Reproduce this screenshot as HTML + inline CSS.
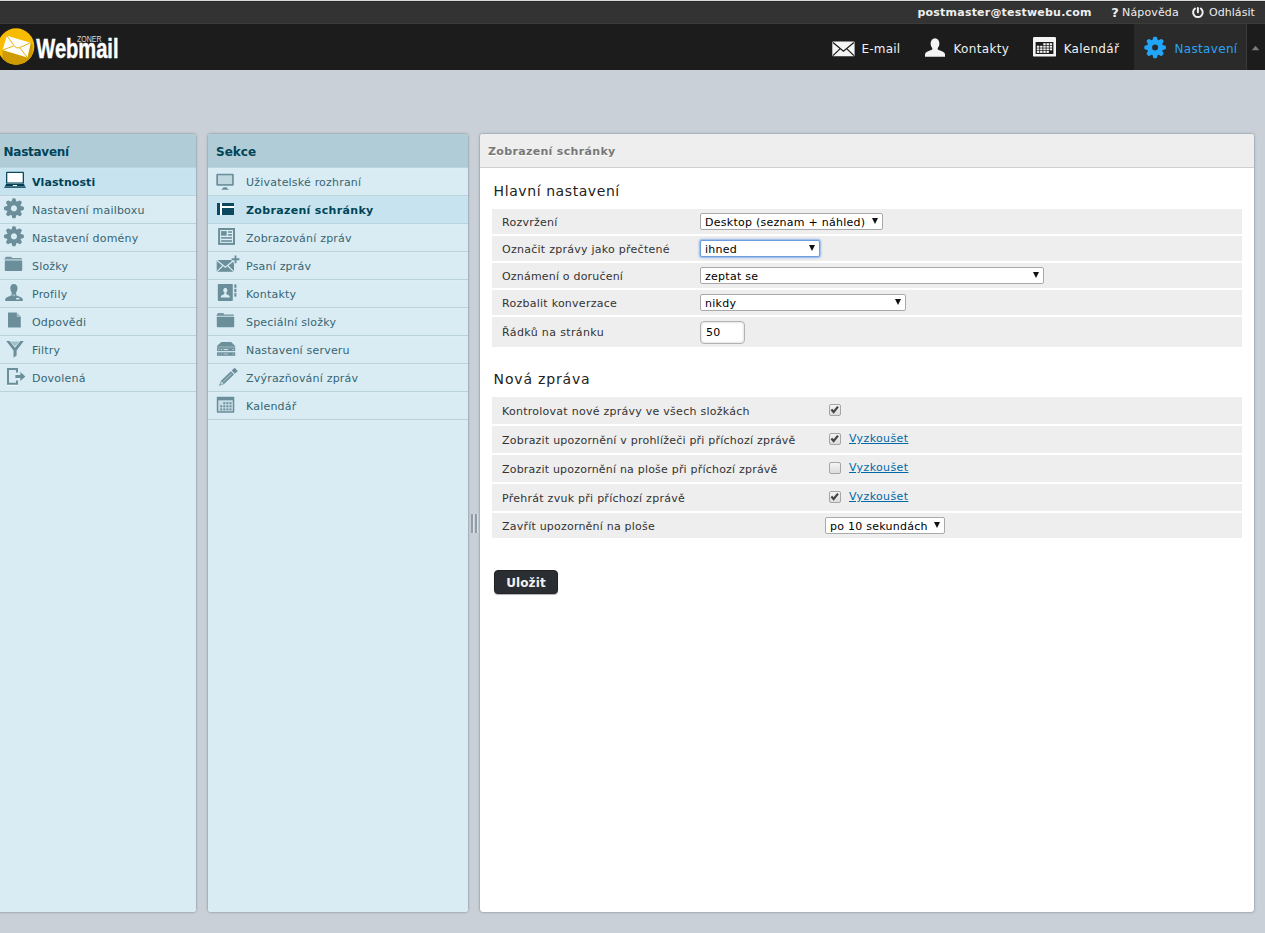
<!DOCTYPE html>
<html lang="cs">
<head>
<meta charset="utf-8">
<title>Zoner Webmail :: Nastavení</title>
<style>
html,body{margin:0;padding:0;}
body{width:1265px;height:933px;overflow:hidden;background:#c9d0d8;font-family:"DejaVu Sans","Liberation Sans",sans-serif;font-size:11px;color:#333;position:relative;}
*{box-sizing:border-box;}
a{color:#0069a6;}
#edge{position:absolute;left:0;top:0;width:1265px;height:1px;background:#d8d8d8;}
#topline{position:absolute;left:0;top:1px;width:1265px;height:23px;background:#333333;color:#f0f0f0;border-top:1px solid #2b2b2b;border-bottom:1px solid #3b3b3b;}
#topline span,#topline a{position:absolute;top:-1px;line-height:24px;white-space:nowrap;color:#eee;text-decoration:none;}
#topnav{position:absolute;left:0;top:24px;width:1265px;height:46px;background:#1c1c1c;}
#seltab{position:absolute;left:1134px;top:0;width:113px;height:46px;background:#2a2a2a;border-right:1px solid #3a3a3a;}
#taskbar a{position:absolute;top:0;height:46px;line-height:50px;color:#f0f0f0;font-size:12px;text-decoration:none;white-space:nowrap;}
.uibox{position:absolute;border:1px solid #a9b3bd;border-radius:4px;background:#fff;overflow:hidden;box-shadow:0 0 2px rgba(120,130,140,.38);}
.boxtitle{height:34px;background:#b0ccd7;color:#004458;font-size:12px;font-weight:bold;line-height:37px;padding-left:8px;border-bottom:1px solid #bbd3da;white-space:nowrap;}
.listing{margin:0;padding:0;list-style:none;background:#d9ecf4;position:absolute;left:0;right:0;top:34px;bottom:0;}
.listing li{letter-spacing:.2px;position:relative;height:28px;border-top:1px solid #dceef5;border-bottom:1px solid #b9d2db;color:#376572;line-height:27px;white-space:nowrap;background:#d9ecf4;}
.listing li.sel{border-top-color:#cbe5f0;background:#c7e3ef;color:#004458;font-weight:bold;letter-spacing:.08px;}
.listing li svg{position:absolute;top:0;}

#p3 .boxtitle{background:#eeeeee;color:#777;border-bottom:1px solid #d0d0d0;font-size:11px;letter-spacing:.33px;line-height:35px;text-shadow:0 1px 0 #fff;}
#p3 h2{position:absolute;margin:0;font-size:14px;letter-spacing:.45px;font-weight:normal;color:#222;line-height:20px;white-space:nowrap;}
.row{letter-spacing:.26px;position:absolute;left:12px;width:750px;background:#eeeeee;color:#333;white-space:nowrap;}
.row .lb{position:absolute;left:10px;top:0;}
.select{position:absolute;height:17px;border-radius:2px;border:1px solid #a9a9a9;background:#fff;color:#000;line-height:18px;padding-left:4px;white-space:nowrap;}
.select i{position:absolute;right:3.6px;top:4.2px;width:0;height:0;border-left:3.7px solid transparent;border-right:3.7px solid transparent;border-top:6.2px solid #111;}
.select.focus{border:1px solid #6d9fe0;box-shadow:0 0 2px 1px #8db4ea;border-radius:2px;}
.cb{position:absolute;width:12px;height:12px;border:1px solid #a6a6a6;border-radius:2px;background:linear-gradient(#f4f4f4,#dcdcdc);}
.cb svg{position:absolute;left:-1px;top:-1px;}
.try{position:absolute;color:#0069a6;text-decoration:underline;letter-spacing:.38px;}
#save{position:absolute;left:14px;top:436px;width:64px;height:24px;border-radius:4px;background:#2a2d31;border:1px solid #202226;color:#f2f2f2;font-weight:bold;font-size:12px;line-height:24px;letter-spacing:.1px;text-align:center;box-shadow:0 1px 1px rgba(0,0,0,.3);}
</style>
</head>
<body>
<div id="edge"></div>
<div id="topline">
  <span style="left:917.5px;font-weight:bold;letter-spacing:.21px;">postmaster@testwebu.com</span>
  <span style="left:1111.3px;font-weight:bold;font-size:13px;line-height:23px;">?</span>
  <span style="left:1122px;letter-spacing:.15px;">Nápověda</span>
  <span style="left:1209px;letter-spacing:.05px;">Odhlásit</span>
</div>
<div id="topnav">
  <div id="seltab"></div>
  <div id="taskbar">
    <a style="left:861.5px;letter-spacing:.2px;">E-mail</a>
    <a style="left:953.5px;letter-spacing:.33px;">Kontakty</a>
    <a style="left:1063.7px;letter-spacing:.27px;">Kalendář</a>
    <a style="left:1174.5px;letter-spacing:.33px;color:#2aa3f4;">Nastavení</a>
  </div>
</div>

<div class="uibox" id="p1" style="left:-4px;top:133px;width:201px;height:780px;">
  <div class="boxtitle" style="padding-left:6.5px;letter-spacing:-.25px;">Nastavení</div>
  <ul class="listing" id="l1">
    <li class="sel"><span style="position:absolute;left:35px;">Vlastnosti</span></li>
    <li><span style="position:absolute;left:35px;">Nastavení mailboxu</span></li>
    <li><span style="position:absolute;left:35px;">Nastavení domény</span></li>
    <li><span style="position:absolute;left:35px;">Složky</span></li>
    <li><span style="position:absolute;left:35px;">Profily</span></li>
    <li><span style="position:absolute;left:35px;">Odpovědi</span></li>
    <li><span style="position:absolute;left:35px;">Filtry</span></li>
    <li><span style="position:absolute;left:35px;">Dovolená</span></li>
  </ul>
</div>

<div class="uibox" id="p2" style="left:207px;top:133px;width:262px;height:780px;">
  <div class="boxtitle">Sekce</div>
  <ul class="listing" id="l2">
    <li><span style="position:absolute;left:38px;">Uživatelské rozhraní</span></li>
    <li class="sel"><span style="position:absolute;left:38px;letter-spacing:.33px;">Zobrazení schránky</span></li>
    <li><span style="position:absolute;left:38px;">Zobrazování zpráv</span></li>
    <li><span style="position:absolute;left:38px;">Psaní zpráv</span></li>
    <li><span style="position:absolute;left:38px;">Kontakty</span></li>
    <li><span style="position:absolute;left:38px;">Speciální složky</span></li>
    <li><span style="position:absolute;left:38px;">Nastavení serveru</span></li>
    <li><span style="position:absolute;left:38px;">Zvýrazňování zpráv</span></li>
    <li><span style="position:absolute;left:38px;">Kalendář</span></li>
  </ul>
</div>

<div class="uibox" id="p3" style="left:479px;top:133px;width:776px;height:780px;">
  <div class="boxtitle">Zobrazení schránky</div>
  <h2 style="left:13.6px;top:47px;letter-spacing:.58px;">Hlavní nastavení</h2>
  <div class="row" style="top:75px;height:25px;line-height:28px;"><span class="lb">Rozvržení</span>
    <div class="select" style="left:208px;top:4px;width:183px;">Desktop (seznam + náhled)<i></i></div></div>
  <div class="row" style="top:102px;height:25px;line-height:28px;"><span class="lb">Označit zprávy jako přečtené</span>
    <div class="select focus" style="left:208px;top:4px;width:120px;">ihned<i></i></div></div>
  <div class="row" style="top:129px;height:25px;line-height:28px;"><span class="lb" style="letter-spacing:.19px;">Oznámení o doručení</span>
    <div class="select" style="left:208px;top:4px;width:344px;">zeptat se<i></i></div></div>
  <div class="row" style="top:156px;height:25px;line-height:28px;"><span class="lb">Rozbalit konverzace</span>
    <div class="select" style="left:208px;top:4px;width:206px;">nikdy<i></i></div></div>
  <div class="row" style="top:183px;height:30px;line-height:32px;"><span class="lb" style="letter-spacing:.37px;">Řádků na stránku</span>
    <div class="select" style="left:208px;top:4px;width:45px;height:23px;line-height:21px;border-radius:4px;border-color:#b2b2b2;box-shadow:inset 0 0 2px 1px rgba(0,0,0,.1);padding-left:5px;">50</div></div>

  <h2 style="left:13.6px;top:235px;letter-spacing:.83px;">Nová zpráva</h2>
  <div class="row" style="top:263px;height:27px;line-height:30px;"><span class="lb">Kontrolovat nové zprávy ve všech složkách</span>
    <div class="cb" style="left:337px;top:7px;"><svg width="12" height="12" viewBox="0 0 12 12"><path d="M2.4,5.6 L4.6,8 L9,2.6" fill="none" stroke="#454545" stroke-width="2.2"/></svg></div></div>
  <div class="row" style="top:292px;height:27px;line-height:30px;"><span class="lb" style="letter-spacing:.22px;">Zobrazit upozornění v prohlížeči při příchozí zprávě</span>
    <div class="cb" style="left:337px;top:7px;"><svg width="12" height="12" viewBox="0 0 12 12"><path d="M2.4,5.6 L4.6,8 L9,2.6" fill="none" stroke="#454545" stroke-width="2.2"/></svg></div><span class="try" style="left:357px;top:-2px;">Vyzkoušet</span></div>
  <div class="row" style="top:321px;height:27px;line-height:30px;"><span class="lb" style="letter-spacing:.2px;">Zobrazit upozornění na ploše při příchozí zprávě</span>
    <div class="cb off" style="left:337px;top:7px;"></div><span class="try" style="left:357px;top:-2px;">Vyzkoušet</span></div>
  <div class="row" style="top:350px;height:27px;line-height:30px;"><span class="lb">Přehrát zvuk při příchozí zprávě</span>
    <div class="cb" style="left:337px;top:7px;"><svg width="12" height="12" viewBox="0 0 12 12"><path d="M2.4,5.6 L4.6,8 L9,2.6" fill="none" stroke="#454545" stroke-width="2.2"/></svg></div><span class="try" style="left:357px;top:-2px;">Vyzkoušet</span></div>
  <div class="row" style="top:379px;height:25px;line-height:28px;"><span class="lb" style="letter-spacing:.21px;">Zavřít upozornění na ploše</span>
    <div class="select" style="left:333px;top:4px;width:120px;">po 10 sekundách<i></i></div></div>
  <div id="save">Uložit</div>
</div>
<svg id="icons" width="1265" height="933" viewBox="0 0 1265 933" style="position:absolute;left:0;top:0;pointer-events:none;">
<defs><clipPath id="lc"><circle cx="16.1" cy="46.5" r="18.2"/></clipPath></defs>
<g id="logo-mark"><circle cx="16.1" cy="46.5" r="18.2" fill="#f7bc00"/>
<polygon clip-path="url(#lc)" points="2.5,50.1 27.4,57.5 30.8,42.7 32.6,44.6 32.6,70 2.5,70" fill="#cf9b00"/>
<polygon points="6.9,35.8 30.8,42.7 27.4,57.5 2.5,50.1" fill="#fffdf8"/>
<path d="M6.9,35.8 L14.8,46.6 Q16.8,48.9 19.6,47.6 L30.8,42.7 M2.5,50.1 L13.4,46.0 M27.4,57.5 L19.9,48.0" fill="none" stroke="#dba900" stroke-width="0.9"/></g>
<text x="36.3" y="58.4" font-family="Liberation Sans, DejaVu Sans, sans-serif" font-weight="bold" font-size="27.4" fill="#ffffff" stroke="#ffffff" stroke-width="0.45" textLength="82.2" lengthAdjust="spacingAndGlyphs">Webmail</text>
<text x="77" y="42.3" font-family="Liberation Sans, DejaVu Sans, sans-serif" font-size="8.6" fill="#dddddd" textLength="24.5" lengthAdjust="spacingAndGlyphs">ZONER</text>
<g id="ic-power" fill="none" stroke="#f0f0f0" stroke-width="2" stroke-linecap="round"><path d="M1195.0,8.5 A4.8,4.8 0 1,0 1200.8,8.5"/><path d="M1197.9,8 V12.2"/></g>
<g id="ic-mail"><rect x="832.3" y="41.4" width="22.3" height="14.8" rx="1" fill="#f4f4f4"/><path d="M833,42.4 L843.45,51.2 L853.9,42.4 M833,55.6 L840.2,48.6 M853.9,55.6 L846.7,48.6" fill="none" stroke="#1c1c1c" stroke-width="1.3"/></g>
<g id="ic-person" fill="#f4f4f4"><ellipse cx="935" cy="43.6" rx="4.4" ry="5.4"/><path d="M925,56.8 V54.2 Q925,52.3 927.5,51.4 L932.3,49.6 V47 H937.7 V49.6 L942.5,51.4 Q945,52.3 945,54.2 V56.8Z"/></g>
<g id="ic-cal"><rect x="1033" y="37" width="23" height="19.6" rx="1.2" fill="#f4f4f4"/><rect x="1035.6" y="42" width="17.8" height="12" fill="#1c1c1c"/>
<g fill="#f4f4f4"><rect x="1043.3" y="43.2" width="2.4" height="1.9"/><rect x="1046.5" y="43.2" width="2.4" height="1.9"/><rect x="1049.7" y="43.2" width="2.4" height="1.9"/><rect x="1036.9" y="45.8" width="2.4" height="1.9"/><rect x="1040.1" y="45.8" width="2.4" height="1.9"/><rect x="1043.3" y="45.8" width="2.4" height="1.9"/><rect x="1046.5" y="45.8" width="2.4" height="1.9"/><rect x="1049.7" y="45.8" width="2.4" height="1.9"/><rect x="1036.9" y="48.4" width="2.4" height="1.9"/><rect x="1040.1" y="48.4" width="2.4" height="1.9"/><rect x="1043.3" y="48.4" width="2.4" height="1.9"/><rect x="1046.5" y="48.4" width="2.4" height="1.9"/><rect x="1049.7" y="48.4" width="2.4" height="1.9"/><rect x="1036.9" y="51.0" width="2.4" height="1.9"/><rect x="1040.1" y="51.0" width="2.4" height="1.9"/><rect x="1043.3" y="51.0" width="2.4" height="1.9"/><rect x="1046.5" y="51.0" width="2.4" height="1.9"/></g></g>
<path id="ic-gear-blue" d="M1153.09,40.54 L1154.08,37.50 L1156.12,37.50 L1157.11,40.54 L1158.57,41.14 L1161.41,39.70 L1162.85,41.14 L1161.41,43.98 L1162.01,45.44 L1165.05,46.43 L1165.05,48.47 L1162.01,49.46 L1161.41,50.92 L1162.85,53.76 L1161.41,55.20 L1158.57,53.76 L1157.11,54.36 L1156.12,57.40 L1154.08,57.40 L1153.09,54.36 L1151.63,53.76 L1148.79,55.20 L1147.35,53.76 L1148.79,50.92 L1148.19,49.46 L1145.15,48.47 L1145.15,46.43 L1148.19,45.44 L1148.79,43.98 L1147.35,41.14 L1148.79,39.70 L1151.63,41.14Z M1151.30,47.45 a3.80,3.80 0 1,0 7.60,0 a3.80,3.80 0 1,0 -7.60,0Z" fill="#22a6fb" fill-rule="evenodd" stroke="#22a6fb" stroke-width="1.6" stroke-linejoin="round"/>
<polygon points="1251.7,50.3 1259.3,50.3 1255.5,45.8" fill="#7a7a7a"/>
<g id="ic-laptop"><path d="M6,183.6 V172.8 Q6,171.8 7,171.8 H23 Q24,171.8 24,172.8 V183.6Z" fill="#0a495e"/><rect x="7.3" y="173" width="15.4" height="9.1" fill="#ffffff"/><rect x="7.3" y="182.1" width="15.4" height="1.6" fill="#7ba4b3"/><polygon points="6.2,183.8 23.8,183.8 25.2,186.5 4.8,186.5" fill="#053f54"/><path d="M4.8,186.4 H25.2 L26,187.2 Q26,188 25.2,188 H4.8 Q4,188 4,187.2Z" fill="#2a6378"/><rect x="12.8" y="184.9" width="4.3" height="1.2" rx="0.4" fill="#ffffff"/></g>
<path d="M12.09,202.07 L13.08,199.14 L14.82,199.14 L15.81,202.07 L17.04,202.58 L19.81,201.21 L21.04,202.44 L19.67,205.21 L20.18,206.44 L23.11,207.43 L23.11,209.17 L20.18,210.16 L19.67,211.39 L21.04,214.16 L19.81,215.39 L17.04,214.02 L15.81,214.53 L14.82,217.46 L13.08,217.46 L12.09,214.53 L10.86,214.02 L8.09,215.39 L6.86,214.16 L8.23,211.39 L7.72,210.16 L4.79,209.17 L4.79,207.43 L7.72,206.44 L8.23,205.21 L6.86,202.44 L8.09,201.21 L10.86,202.58Z M10.10,208.30 a3.85,3.85 0 1,0 7.70,0 a3.85,3.85 0 1,0 -7.70,0Z" fill="#6b8f9a" fill-rule="evenodd" stroke="#6b8f9a" stroke-width="1.6" stroke-linejoin="round"/>
<path d="M12.09,230.07 L13.08,227.14 L14.82,227.14 L15.81,230.07 L17.04,230.58 L19.81,229.21 L21.04,230.44 L19.67,233.21 L20.18,234.44 L23.11,235.43 L23.11,237.17 L20.18,238.16 L19.67,239.39 L21.04,242.16 L19.81,243.39 L17.04,242.02 L15.81,242.53 L14.82,245.46 L13.08,245.46 L12.09,242.53 L10.86,242.02 L8.09,243.39 L6.86,242.16 L8.23,239.39 L7.72,238.16 L4.79,237.17 L4.79,235.43 L7.72,234.44 L8.23,233.21 L6.86,230.44 L8.09,229.21 L10.86,230.58Z M10.10,236.30 a3.85,3.85 0 1,0 7.70,0 a3.85,3.85 0 1,0 -7.70,0Z" fill="#6b8f9a" fill-rule="evenodd" stroke="#6b8f9a" stroke-width="1.6" stroke-linejoin="round"/>
<g><path d="M5.0,258.1 l0.9,-1.4 h5.4 l0.9,1.4 h9.6 v1.7 h-17.4Z" fill="#7796a1"/><rect x="4.8" y="260.2" width="17.4" height="10.8" rx="0.8" fill="#6b8f9a"/><rect x="4.8" y="259.5" width="17.4" height="0.8" fill="#c6dce4"/></g>
<g id="ic-profile" fill="#6b8f9a"><path d="M13.9,283.9 C16.3,283.9 17.6,285.6 17.5,288 C17.4,290.6 16.2,293.6 13.9,293.6 C11.6,293.6 10.4,290.6 10.3,288 C10.2,285.6 11.5,283.9 13.9,283.9Z"/><path d="M5.2,301 V299.4 Q5.2,297.9 7,297.2 L11.6,295.3 V292.4 H16.2 V295.3 L20.9,297.2 Q22.8,297.9 22.8,299.4 V301Z"/><polygon points="12.2,295 13.9,296.5 15.6,295 15.6,294.6 12.2,294.6" fill="#d9ecf4" opacity="0.55"/><rect x="16.1" y="297.9" width="3.3" height="1.5" fill="#d9ecf4"/></g>
<g id="ic-doc"><polygon points="8,312.5 16.9,312.5 20.8,316.5 20.8,327.5 8,327.5" fill="#6b8f9a"/><polygon points="16.9,312.5 20.8,316.5 16.9,316.5" fill="#d9ecf4"/><polygon points="17.3,313.6 19.8,316.1 17.3,316.1" fill="#87a4ae"/></g>
<g id="ic-filter"><polygon points="6.2,341 9.6,341 15,347.8 20.4,341 23.8,341 16.6,350.4 16.6,355.4 13.5,357.8 13.5,350.4" fill="#6b8f9a"/><polygon points="10.6,341.4 19.4,341.4 15,346.6" fill="#a3bec8"/></g>
<g id="ic-vac"><rect x="7" y="384.9" width="11" height="0.9" fill="#ffffff" opacity="0.8"/><path d="M17,372.4 V369 H8 V383.8 H17 V380.6" fill="none" stroke="#6b8f9a" stroke-width="2"/><polygon points="15.4,375 20.4,375 20.4,371.9 25.4,376.5 20.4,381.1 20.4,378 15.4,378" fill="#6b8f9a"/></g>
<g id="ic-monitor"><rect x="216.3" y="173.7" width="17.5" height="12" rx="1" fill="#6b8f9a"/><rect x="218" y="175.3" width="14.1" height="8.8" fill="#c1d7df"/><polygon points="221.2,189.8 223.6,187.2 226.5,187.2 228.9,189.8" fill="#6b8f9a"/></g>
<g id="ic-mbox"><rect x="220" y="203" width="2" height="12" fill="#ffffff"/><rect x="222" y="206" width="12" height="2" fill="#ffffff"/><g fill="#0a495e"><rect x="217" y="203" width="3" height="12"/><rect x="222" y="203" width="12" height="3"/><rect x="222" y="208" width="12" height="7"/></g></g>
<g id="ic-msg"><rect x="219.1" y="229" width="14.9" height="14.9" fill="#dceef5" stroke="#6b8f9a" stroke-width="2"/><g fill="#6b8f9a"><rect x="221.1" y="231.1" width="5.6" height="4.6"/><rect x="228.1" y="231.2" width="3.9" height="1.6"/><rect x="228.1" y="234.1" width="3.9" height="1.6"/><rect x="221.1" y="237.1" width="10.9" height="1.6"/><rect x="221.1" y="240.2" width="10.9" height="1.6"/></g></g>
<g id="ic-compose"><rect x="216.7" y="260" width="17.3" height="11.8" fill="#6b8f9a"/><path d="M216.7,260.3 L225.35,267.3 L234,260.3 M216.7,271.8 L222.6,266 M234,271.8 L228.1,266" fill="none" stroke="#d9ecf4" stroke-width="1.1"/><path d="M235.5,255.4 V263.2 M231.6,259.3 H239.4" stroke="#d9ecf4" stroke-width="4.2"/><path d="M235.5,255.4 V263.2 M231.6,259.3 H239.4" stroke="#6b8f9a" stroke-width="1.9"/></g>
<g id="ic-book"><rect x="217.8" y="284" width="15" height="17" rx="0.8" fill="#6b8f9a"/><g fill="#6b8f9a"><rect x="234.3" y="284.4" width="2.1" height="3.4"/><rect x="234.3" y="288.8" width="2.1" height="3.4"/><rect x="234.3" y="293.2" width="2.1" height="3.4"/></g><g fill="#d9ecf4"><ellipse cx="225.3" cy="290.3" rx="2" ry="2.5"/><path d="M220.9,297.4 V296.6 Q220.9,295.6 222.2,295.1 L224.2,294.3 V292.6 H226.4 V294.3 L228.4,295.1 Q229.7,295.6 229.7,296.6 V297.4Z"/></g></g>
<g><path d="M217.0,314.4 l0.9,-1.4 h5.4 l0.9,1.4 h9.6 v1.7 h-17.4Z" fill="#7796a1"/><rect x="216.8" y="316.5" width="17.4" height="10.8" rx="0.8" fill="#6b8f9a"/><rect x="216.8" y="315.8" width="17.4" height="0.8" fill="#c6dce4"/></g>
<g id="ic-server"><polygon points="221.3,342 231.2,342 235.2,345.9 217,345.9" fill="#6b8f9a"/><rect x="217" y="345.9" width="18.2" height="2.3" fill="#86a4ae"/><rect x="217" y="348.1" width="18.2" height="3" fill="#6b8f9a"/><rect x="217" y="352.3" width="18.2" height="3.5" fill="#6b8f9a"/><g fill="#d4e7ee"><rect x="218.3" y="349.1" width="1.2" height="1"/><rect x="221" y="349.1" width="1.2" height="1"/><rect x="223.6" y="349.1" width="4.6" height="1"/><rect x="232.6" y="349.1" width="1.2" height="1"/></g><g fill="#9fbac4"><rect x="218.3" y="353.3" width="1.2" height="1.4"/><rect x="221" y="353.3" width="1.2" height="1.4"/><rect x="223.6" y="353.3" width="4.6" height="1.4"/><rect x="232.6" y="353.3" width="1.2" height="1.4"/></g></g>
<g id="ic-pencil" transform="translate(218.8,385.9) rotate(-43.5)" fill="#6b8f9a"><polygon points="0,0 5.2,-2.2 5.2,2.2"/><rect x="5.2" y="-2.2" width="13.6" height="4.4"/><rect x="19.9" y="-2.3" width="4.2" height="4.6" rx="0.4"/><polygon points="2.3,-0.6 5.2,-1.2 5.2,1.2 2.3,0.6" fill="#c3d9e1"/><rect x="6.2" y="-0.45" width="11.6" height="0.9" fill="#a9c3cc"/></g>
<g id="ic-cal2"><rect x="216.8" y="396.7" width="17.5" height="16" rx="0.8" fill="#6b8f9a"/><rect x="218.3" y="400.3" width="14.5" height="10.9" fill="#c9dee6"/><g fill="#6b8f9a"><rect x="223.3" y="402.2" width="2" height="2"/><rect x="226.4" y="402.2" width="2" height="2"/><rect x="229.5" y="402.2" width="2" height="2"/><rect x="220.2" y="405.3" width="2" height="2"/><rect x="223.3" y="405.3" width="2" height="2"/><rect x="226.4" y="405.3" width="2" height="2"/><rect x="229.5" y="405.3" width="2" height="2"/><rect x="220.2" y="408.4" width="2" height="2"/><rect x="223.3" y="408.4" width="2" height="2"/><rect x="226.4" y="408.4" width="2" height="2"/><rect x="229.5" y="408.4" width="2" height="2"/></g></g>
<g id="splitter"><rect x="471" y="514" width="2" height="19" fill="#8f9da8"/><rect x="473" y="514" width="1" height="19" fill="#dde1e5"/><rect x="475" y="514" width="2" height="19" fill="#8f9da8"/><rect x="477" y="514" width="1" height="19" fill="#dde1e5"/></g>
</svg>
</body>
</html>
